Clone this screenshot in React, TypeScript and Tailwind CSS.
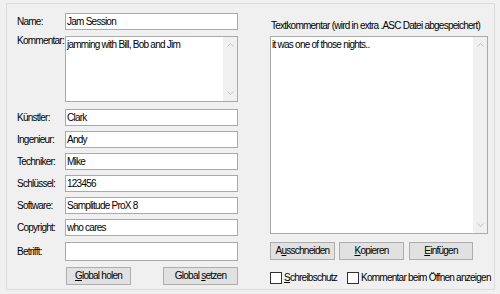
import * as React from "react";

type Field = {
  label: string;
  value: string;
};

const fields: Field[] = [
  { label: "Künstler:", value: "Clark" },
  { label: "Ingenieur:", value: "Andy" },
  { label: "Techniker:", value: "Mike" },
  { label: "Schlüssel:", value: "123456" },
  { label: "Software:", value: "Samplitude ProX 8" },
  { label: "Copyright:", value: "who cares" },
];

function Chevron({ down }: { down?: boolean }) {
  return (
    <svg width="7" height="4" viewBox="0 0 7 4" className="block">
      <path
        d={down ? "M0.5 0.5 L3.5 3.5 L6.5 0.5" : "M0.5 3.5 L3.5 0.5 L6.5 3.5"}
        fill="none"
        stroke="#c2c2c2"
        strokeWidth="1"
      />
    </svg>
  );
}

function ScrollBar() {
  return (
    <div className="flex w-[14px] shrink-0 flex-col items-center justify-between bg-[#f0f0f0] py-[6px]">
      <Chevron />
      <Chevron down />
    </div>
  );
}

function TextBox({ value, className = "h-[17px]" }: { value: string; className?: string }) {
  return (
    <div className={`flex w-[173px] items-center border border-[#a9a9a9] bg-white pl-[1px] ${className}`}>
      {value}
    </div>
  );
}

function Row({ label, children, className = "" }: { label: string; children: React.ReactNode; className?: string }) {
  return (
    <div className={`flex items-center ${className}`}>
      <span className="w-[48px] shrink-0 whitespace-nowrap">{label}</span>
      {children}
    </div>
  );
}

function WinButton({ children, className = "" }: { children: React.ReactNode; className?: string }) {
  return (
    <button
      type="button"
      className={`flex h-[18px] items-center justify-center border border-[#adadad] bg-[#e1e1e1] ${className}`}
    >
      {children}
    </button>
  );
}

function CheckBox({ children }: { children: React.ReactNode }) {
  return (
    <label className="flex items-center gap-[2px] whitespace-nowrap">
      <span className="block size-[12px] shrink-0 border border-[#333333] bg-white" />
      <span>{children}</span>
    </label>
  );
}

export default function App() {
  return (
    <div
      className="h-[294px] w-[500px] overflow-hidden bg-[#f0f0f0] pl-[6px] pr-[5px] pt-[3px] text-[10px] leading-none tracking-[-0.75px] text-black"
      style={{ fontFamily: '"Liberation Sans", Arial, sans-serif' }}
    >
      <div className="flex h-[287px] border border-[#dcdcdc] pl-[10px] pt-[9px]">
        {/* linke Spalte: Tags */}
        <div className="flex w-[221px] flex-col">
          <Row label="Name:">
            <TextBox value="Jam Session" />
          </Row>

          <Row label="Kommentar:" className="mt-[6px] !items-start">
            <div className="flex h-[66px] w-[173px] border border-[#a9a9a9] bg-white">
              <div className="flex-1 pl-[1px] pt-[3px]">jamming with Bill, Bob and Jim</div>
              <ScrollBar />
            </div>
          </Row>

          <div className="mt-[7px] flex flex-col gap-[5px]">
            {fields.map((f) => (
              <Row key={f.label} label={f.label}>
                <TextBox value={f.value} />
              </Row>
            ))}
          </div>

          <Row label="Betrifft:" className="mt-[6px]">
            <TextBox value="" className="h-[19px]" />
          </Row>

          <div className="mt-[6px] flex pl-[49px]">
            <WinButton className="w-[65px]">
              <span><u>G</u>lobal holen</span>
            </WinButton>
            <WinButton className="ml-[32px] w-[75px]">
              <span>Global <u>s</u>etzen</span>
            </WinButton>
          </div>
        </div>

        {/* rechte Spalte: Textkommentar */}
        <div className="ml-[32px] flex w-[218px] flex-col">
          <div className="flex h-[23px] items-center whitespace-nowrap pl-[1px] pt-[3px]">
            Textkommentar (wird in extra .ASC Datei abgespeichert)
          </div>
          <div className="flex h-[198px] border border-[#a9a9a9] bg-white">
            <div className="flex-1 pl-[1px] pt-[3px]">it was one of those nights..</div>
            <ScrollBar />
          </div>
          <div className="mt-[8px] flex gap-[4px]">
            <WinButton className="w-[65px]">
              <span>A<u>u</u>sschneiden</span>
            </WinButton>
            <WinButton className="w-[65px]">
              <span><u>K</u>opieren</span>
            </WinButton>
            <WinButton className="ml-[1px] w-[64px]">
              <span><u>E</u>infügen</span>
            </WinButton>
          </div>
          <div className="mt-[12px] flex gap-[10px]">
            <CheckBox>
              <u>S</u>chreibschutz
            </CheckBox>
            <CheckBox>Kommentar beim Öffnen anzeigen</CheckBox>
          </div>
        </div>
      </div>
    </div>
  );
}
